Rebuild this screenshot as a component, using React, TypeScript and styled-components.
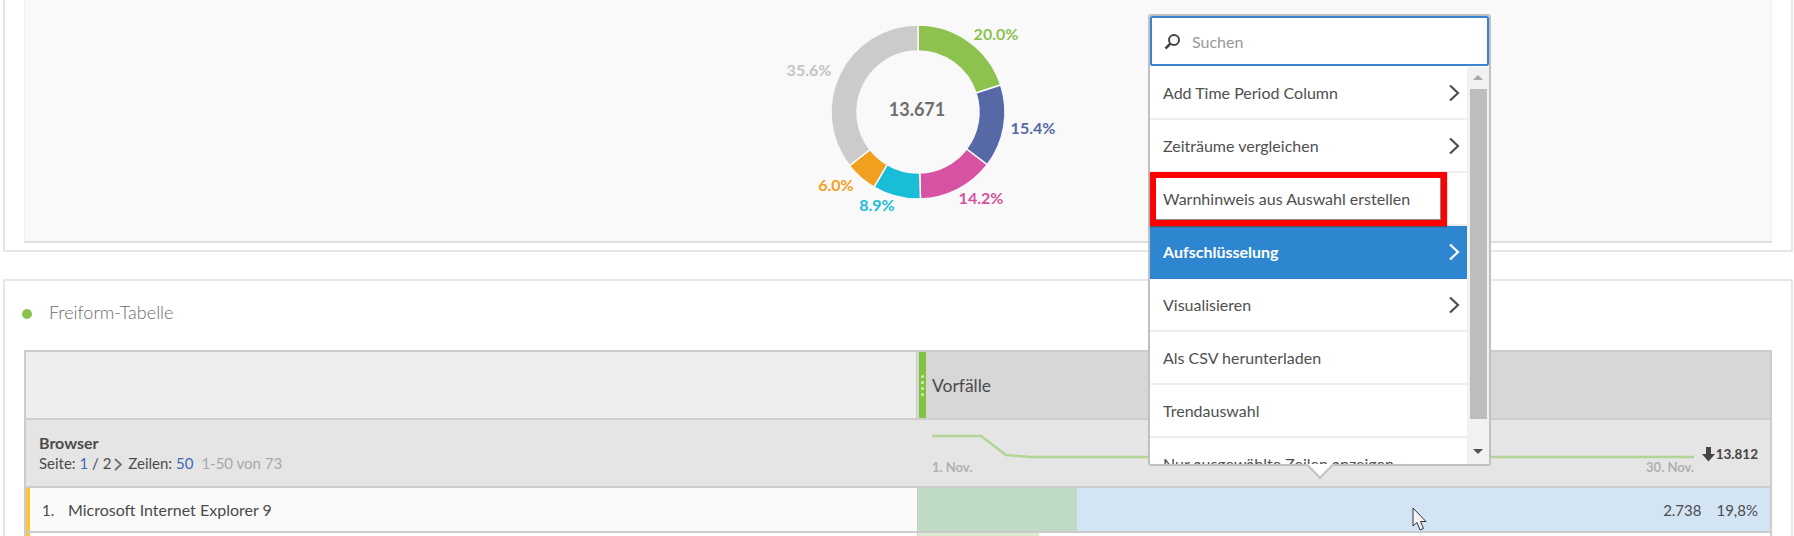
import React from "react";
import styled, { createGlobalStyle } from "styled-components";

const Global = createGlobalStyle`
  html, body {
    margin: 0;
    height: 536px;
    overflow: hidden;
    background: #fff;
    font-family: "Lato", "Open Sans", sans-serif;
    color: #4b4b4b;
  }
  #root { position: relative; }
`;

const Panel = styled.section`
  box-sizing: border-box;
  width: 1790px;
  margin-left: 3px;
  border: 2px solid #e6e6e6;
  padding: 0 19px;
`;

const ChartPanel = styled(Panel)`
  height: 252px;
  border-top: none;
  padding-bottom: 7px;
`;

const ChartArea = styled.div`
  box-sizing: border-box;
  height: 243px;
  background: #f9f9f9;
  border: 1px solid #eeeeee;
  border-top: none;
  border-bottom: 2px solid #dedede;
  display: flex;
  justify-content: center;
`;

const TablePanel = styled(Panel)`
  margin-top: 27px;
  height: 257px;
  border-bottom: none;
  overflow: hidden;
`;

const PanelTitle = styled.div`
  display: flex;
  align-items: center;
  gap: 17px;
  height: 61px;
  margin: 0 0 8px -2px;
  font-size: 18px;
  font-weight: 300;
  color: #6b6b6b;
`;

const Dot = styled.span`
  width: 10px;
  height: 10px;
  border-radius: 50%;
  background: #8cc350;
  margin-top: 4px;
`;

const Table = styled.div`
  border: 2px solid #cccccc;
  border-bottom: none;
`;

const Row = styled.div<{ $h: number }>`
  box-sizing: border-box;
  display: grid;
  grid-template-columns: 891px 1fr;
  height: ${(p) => p.$h}px;
  border-bottom: 2px solid #cccccc;
`;

const HeadLeft = styled.div`
  background: #eeeeee;
  border-right: 1px solid #cccccc;
`;

const HeadRight = styled.div`
  display: flex;
  align-items: center;
  background: #d7d7d7;
  font-size: 17.5px;
  color: #4b4b4b;
`;

const Grip = styled.div`
  align-self: stretch;
  width: 7px;
  margin: 0 6px 0 2px;
  background: #82c341;
  display: flex;
  flex-direction: column;
  align-items: center;
  justify-content: center;
  gap: 3px;
  i {
    width: 3px;
    height: 3px;
    border-radius: 50%;
    background: #d4edbc;
  }
`;

const SubLeft = styled.div`
  background: #e5e5e5;
  padding: 12px 13px 0;
  font-size: 15px;
  line-height: 21px;
  b { display: block; font-weight: 700; font-size: 16px; }
`;

const Blue = styled.span`
  color: #3f6ab5;
`;

const Muted = styled.span`
  color: #a8a8a8;
  margin-left: 8px;
`;

const SmallChevron = styled.svg`
  margin: 0 6px 0 3px;
  vertical-align: -2px;
`;

const SubRight = styled.div`
  background: #e5e5e5;
  display: flex;
  align-items: flex-start;
  padding: 14px 12px 0 15px;
`;

const Spark = styled.div`
  width: 762px;
  svg { display: block; }
`;

const SparkLabels = styled.div`
  display: flex;
  justify-content: space-between;
  font-size: 13px;
  font-weight: 700;
  color: #b0b0b0;
  margin-top: -5px;
`;

const Total = styled.div`
  margin-left: auto;
  margin-top: 12px;
  display: flex;
  align-items: center;
  gap: 1px;
  font-size: 13.5px;
  font-weight: 700;
  color: #444;
`;

const NameCell = styled.div<{ $bg: string }>`
  display: flex;
  align-items: center;
  background: ${(p) => p.$bg};
  border-left: 4px solid #fdc639;
  padding-left: 12px;
  font-size: 16px;
  color: #4b4b4b;
  span { width: 26px; font-size: 15px; }
`;

const BarCell = styled.div<{ $bg: string }>`
  position: relative;
  display: flex;
  align-items: center;
  justify-content: flex-end;
  gap: 15px;
  padding-right: 12px;
  background: ${(p) => p.$bg};
  border-left: 1px solid #cccccc;
  font-size: 15px;
  color: #4b4b4b;
`;

const BarFill = styled.div<{ $w: number; $c: string }>`
  position: absolute;
  left: 0;
  top: 0;
  bottom: 0;
  width: ${(p) => p.$w}px;
  background: ${(p) => p.$c};
`;

const BarValue = styled.span`
  position: relative;
`;

const Menu = styled.div`
  position: absolute;
  left: 1148px;
  top: 14px;
  box-sizing: border-box;
  width: 343px;
  height: 452px;
  background: #fff;
  border: 2px solid #c0c0c0;
  border-radius: 3px;
`;

const Search = styled.div`
  box-sizing: border-box;
  height: 50px;
  display: flex;
  align-items: center;
  gap: 11px;
  padding-left: 12px;
  border: 2px solid #3a83d0;
  border-radius: 2px;
  color: #999;
  font-size: 16px;
`;

const MenuBody = styled.div`
  position: relative;
  z-index: 1;
  display: flex;
  height: 397px;
  margin-top: 1px;
  background: #fff;
`;

const MenuList = styled.div`
  flex: 1;
  overflow: hidden;
`;

const MenuItem = styled.div<{ $active?: boolean }>`
  box-sizing: border-box;
  height: 53px;
  display: flex;
  align-items: center;
  justify-content: space-between;
  padding: 0 7px 0 13px;
  font-size: 16px;
  font-weight: ${(p) => (p.$active ? 700 : 400)};
  color: ${(p) => (p.$active ? "#fff" : "#4f4f4f")};
  background: ${(p) => (p.$active ? "#2e86d1" : "#fff")};
  border-bottom: 2px solid ${(p) => (p.$active ? "#2e86d1" : "#eeeeee")};
`;

const ScrollTrack = styled.div`
  width: 22px;
  background: #f1f1f1;
  display: flex;
  flex-direction: column;
  align-items: center;
  justify-content: space-between;
  padding: 8px 0 10px;
  box-sizing: border-box;
`;

const Arrow = styled.div<{ $up?: boolean }>`
  width: 0;
  height: 0;
  border-left: 5px solid transparent;
  border-right: 5px solid transparent;
  ${(p) =>
    p.$up ? "border-bottom: 5px solid #a8a8a8;" : "border-top: 5px solid #505050;"}
`;

const ScrollThumb = styled.div`
  width: 17px;
  height: 330px;
  margin: 9px 0 auto;
  background: #bdbdbd;
`;

const Callout = styled.div`
  position: absolute;
  z-index: 2;
  left: 0;
  top: 156px;
  box-sizing: border-box;
  width: 297px;
  height: 54px;
  border: 6px solid #ff0000;
  box-shadow: inset -1px -1px 0 #8a8a8a, 0 1px 1px #555;
`;

const MenuTip = styled.div`
  position: absolute;
  left: 160px;
  bottom: -11px;
  width: 18px;
  height: 18px;
  background: #fff;
  transform: rotate(45deg);
  border-right: 2px solid #c0c0c0;
  border-bottom: 2px solid #c0c0c0;
`;

const Cursor = styled.svg`
  position: absolute;
  left: 1412px;
  top: 507px;
`;

const segments = [
  { v: 20.0, c: "#8dc24f" },
  { v: 15.4, c: "#5669a6" },
  { v: 14.2, c: "#d652a2" },
  { v: 8.9, c: "#1abdd8" },
  { v: 6.0, c: "#f19f1e" },
  { v: 35.6, c: "#cbcbcb" },
];

const labels = [
  { t: "20.0%", x: 298, y: 40, c: "#8dc24f" },
  { t: "15.4%", x: 335, y: 134, c: "#5669a6" },
  { t: "14.2%", x: 283, y: 204, c: "#d652a2" },
  { t: "8.9%", x: 179, y: 211, c: "#1abdd8" },
  { t: "6.0%", x: 138, y: 191, c: "#f19f1e" },
  { t: "35.6%", x: 111, y: 76, c: "#c4c4c4" },
];

const Donut = () => {
  const cx = 220;
  const cy = 112;
  const R = 87;
  const r = 61;
  const total = segments.reduce((s, x) => s + x.v, 0);
  let acc = 0;
  const pt = (rad: number, a: number) =>
    `${cx + rad * Math.sin(a)} ${cy - rad * Math.cos(a)}`;
  return (
    <svg width="400" height="240" viewBox="0 0 400 240">
      {segments.map((s) => {
        const a0 = (acc / total) * Math.PI * 2;
        acc += s.v;
        const a1 = (acc / total) * Math.PI * 2;
        const large = a1 - a0 > Math.PI ? 1 : 0;
        return (
          <path
            key={s.c}
            d={`M${pt(R, a0)}A${R} ${R} 0 ${large} 1 ${pt(R, a1)}L${pt(r, a1)}A${r} ${r} 0 ${large} 0 ${pt(r, a0)}Z`}
            fill={s.c}
            stroke="#f9f9f9"
            strokeWidth="1.5"
          />
        );
      })}
      {labels.map((l) => (
        <text
          key={l.t}
          x={l.x}
          y={l.y}
          fill={l.c}
          fontSize="16"
          fontWeight="700"
          textAnchor="middle"
          fontFamily="Lato, sans-serif"
        >
          {l.t}
        </text>
      ))}
      <text
        x={cx - 1}
        y={116}
        fill="#6e6e6e"
        fontSize="18"
        fontWeight="700"
        textAnchor="middle"
        fontFamily="Lato, sans-serif"
      >
        13.671
      </text>
    </svg>
  );
};

const Chevron = ({ color }: { color: string }) => (
  <svg width="12" height="18" viewBox="0 0 12 18">
    <path d="M2 1.5L10 9L2 16.5" fill="none" stroke={color} strokeWidth="2.2" />
  </svg>
);

const menuItems = [
  { t: "Add Time Period Column", sub: true },
  { t: "Zeiträume vergleichen", sub: true },
  { t: "Warnhinweis aus Auswahl erstellen" },
  { t: "Aufschlüsselung", sub: true, active: true },
  { t: "Visualisieren", sub: true },
  { t: "Als CSV herunterladen" },
  { t: "Trendauswahl" },
  { t: "Nur ausgewählte Zeilen anzeigen" },
];

export default function App() {
  return (
    <>
      <Global />
      <ChartPanel>
        <ChartArea>
          <Donut />
        </ChartArea>
      </ChartPanel>
      <TablePanel>
        <PanelTitle>
          <Dot />
          Freiform-Tabelle
        </PanelTitle>
        <Table>
          <Row $h={68}>
            <HeadLeft />
            <HeadRight>
              <Grip>
                <i />
                <i />
                <i />
                <i />
              </Grip>
              Vorfälle
            </HeadRight>
          </Row>
          <Row $h={68}>
            <SubLeft>
              <b>Browser</b>
              Seite: <Blue>1</Blue> / 2
              <SmallChevron width="8" height="13" viewBox="0 0 8 13">
                <path d="M1 1L7 6.5L1 12" fill="none" stroke="#6e6e6e" strokeWidth="1.8" />
              </SmallChevron>
              Zeilen: <Blue>50</Blue>
              <Muted>1-50 von 73</Muted>
            </SubLeft>
            <SubRight>
              <Spark>
                <svg width="762" height="30" viewBox="0 0 762 30">
                  <path
                    d="M0 2L49 2L74 21L98 23L762 23"
                    fill="none"
                    stroke="#b2d595"
                    strokeWidth="2.5"
                  />
                </svg>
                <SparkLabels>
                  <span>1. Nov.</span>
                  <span>30. Nov.</span>
                </SparkLabels>
              </Spark>
              <Total>
                <svg width="13" height="16" viewBox="0 0 13 16">
                  <path d="M4 1H9V8H13L6.5 15.5L0 8H4Z" fill="#444" />
                </svg>
                13.812
              </Total>
            </SubRight>
          </Row>
          <Row $h={45}>
            <NameCell $bg="#fafafa">
              <span>1.</span>Microsoft Internet Explorer 9
            </NameCell>
            <BarCell $bg="#d3e5f5">
              <BarFill $w={159} $c="#bfdbc3" />
              <BarValue>2.738</BarValue>
              <BarValue>19,8%</BarValue>
            </BarCell>
          </Row>
          <Row $h={45}>
            <NameCell $bg="#fff" />
            <BarCell $bg="#fff">
              <BarFill $w={121} $c="#dcebd0" />
            </BarCell>
          </Row>
        </Table>
      </TablePanel>

      <Menu>
        <Search>
          <svg width="17" height="17" viewBox="0 0 17 17">
            <circle cx="10" cy="7" r="5" fill="none" stroke="#444" strokeWidth="2" />
            <path d="M6.4 10.6L1.5 15.5" stroke="#444" strokeWidth="2.6" />
          </svg>
          Suchen
        </Search>
        <MenuBody>
          <MenuList>
            {menuItems.map((m) => (
              <MenuItem key={m.t} $active={m.active}>
                {m.t}
                {m.sub && <Chevron color={m.active ? "#fff" : "#4f4f4f"} />}
              </MenuItem>
            ))}
          </MenuList>
          <ScrollTrack>
            <Arrow $up />
            <ScrollThumb />
            <Arrow />
          </ScrollTrack>
        </MenuBody>
        <Callout />
        <MenuTip />
      </Menu>

      <Cursor width="16" height="26" viewBox="0 0 16 26">
        <path
          d="M1 1V19L5 15.5L8 23L11.5 21.5L8.5 14.5H14Z"
          fill="#f4f4f4"
          stroke="#333"
          strokeWidth="1"
        />
      </Cursor>
    </>
  );
}
